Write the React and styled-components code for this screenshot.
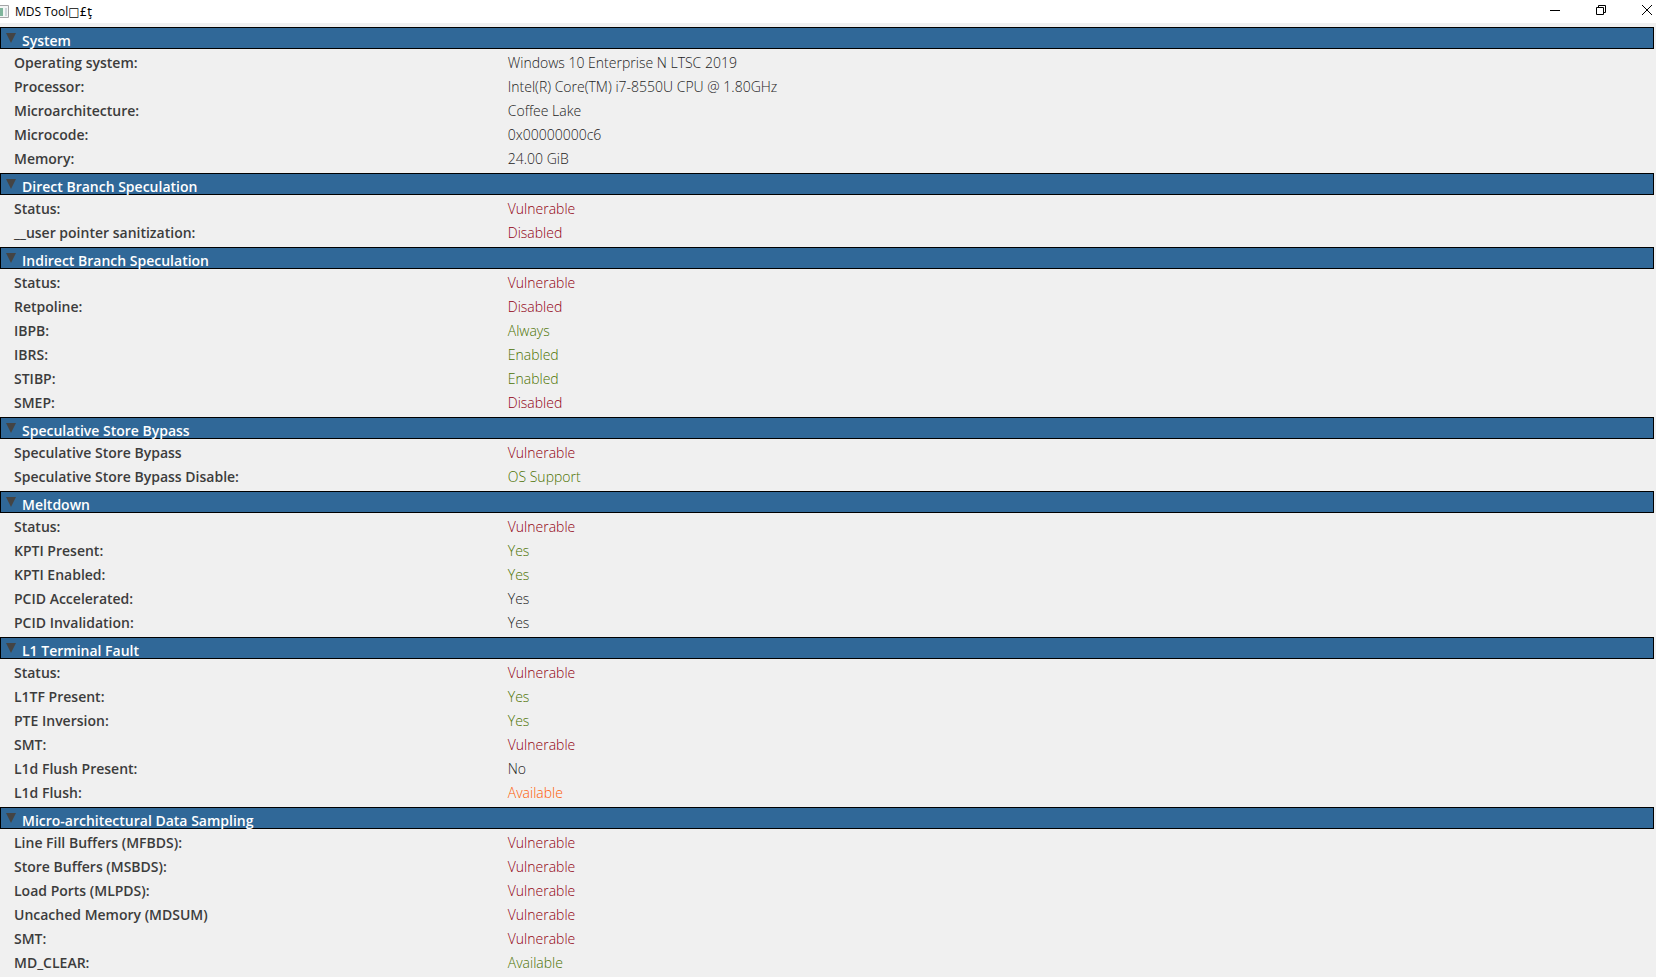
import React, { useState } from "react";
import styled, { createGlobalStyle } from "styled-components";

const sections = [
  {
    title: "System",
    rows: [
      ["Operating system:", "Windows 10 Enterprise N LTSC 2019"],
      ["Processor:", "Intel(R) Core(TM) i7-8550U CPU @ 1.80GHz"],
      ["Microarchitecture:", "Coffee Lake"],
      ["Microcode:", "0x00000000c6"],
      ["Memory:", "24.00 GiB"],
    ],
  },
  {
    title: "Direct Branch Speculation",
    rows: [
      ["Status:", "Vulnerable", "bad"],
      ["__user pointer sanitization:", "Disabled", "bad"],
    ],
  },
  {
    title: "Indirect Branch Speculation",
    rows: [
      ["Status:", "Vulnerable", "bad"],
      ["Retpoline:", "Disabled", "bad"],
      ["IBPB:", "Always", "good"],
      ["IBRS:", "Enabled", "good"],
      ["STIBP:", "Enabled", "good"],
      ["SMEP:", "Disabled", "bad"],
    ],
  },
  {
    title: "Speculative Store Bypass",
    rows: [
      ["Speculative Store Bypass", "Vulnerable", "bad"],
      ["Speculative Store Bypass Disable:", "OS Support", "good"],
    ],
  },
  {
    title: "Meltdown",
    rows: [
      ["Status:", "Vulnerable", "bad"],
      ["KPTI Present:", "Yes", "good"],
      ["KPTI Enabled:", "Yes", "good"],
      ["PCID Accelerated:", "Yes"],
      ["PCID Invalidation:", "Yes"],
    ],
  },
  {
    title: "L1 Terminal Fault",
    rows: [
      ["Status:", "Vulnerable", "bad"],
      ["L1TF Present:", "Yes", "good"],
      ["PTE Inversion:", "Yes", "good"],
      ["SMT:", "Vulnerable", "bad"],
      ["L1d Flush Present:", "No"],
      ["L1d Flush:", "Available", "warn"],
    ],
  },
  {
    title: "Micro-architectural Data Sampling",
    rows: [
      ["Line Fill Buffers (MFBDS):", "Vulnerable", "bad"],
      ["Store Buffers (MSBDS):", "Vulnerable", "bad"],
      ["Load Ports (MLPDS):", "Vulnerable", "bad"],
      ["Uncached Memory (MDSUM)", "Vulnerable", "bad"],
      ["SMT:", "Vulnerable", "bad"],
      ["MD_CLEAR:", "Available", "good"],
    ],
  },
];

const colors = {
  bad: "#900010",
  good: "#4c7200",
  warn: "#ff5a00",
};

function Section({ title, rows }) {
  const [open, setOpen] = useState(true);

  return (
    <section>
      <SectionHeader
        type="button"
        aria-expanded={open}
        onClick={() => setOpen(!open)}
      >
        <Arrow viewBox="0 0 10 10" $open={open} aria-hidden="true">
          <path d="M0 0h10L5 10z" fill="#444" />
        </Arrow>
        <span>{title}</span>
      </SectionHeader>
      {open && (
        <Body>
          <Table>
            <tbody>
              {rows.map(([label, value, status]) => (
                <tr key={label}>
                  <Label scope="row">{label}</Label>
                  <Value $status={status}>{value}</Value>
                </tr>
              ))}
            </tbody>
          </Table>
        </Body>
      )}
    </section>
  );
}

function App() {
  return (
    <Window>
      <GlobalStyle />
      <TitleBar>
        <AppIcon viewBox="0 0 9 14" aria-hidden="true">
          <path d="M0 .5h8.500v12H0" fill="#f4f6f6" stroke="#a5a5a8" />
          <path d="M0 3h3v8H0z" fill="#7fb59c" />
          <path d="M5 3h2v8H5z" fill="#cfd6dc" />
        </AppIcon>
        <Title>
          MDS Tool<Symbols>□£ţ</Symbols>
        </Title>
        <Controls>
          <WindowButton type="button" aria-label="Minimize">
            <svg width="10" height="10" viewBox="0 0 10 10">
              <path d="M0 5.500h10" />
            </svg>
          </WindowButton>
          <WindowButton type="button" aria-label="Restore">
            <svg width="10" height="10" viewBox="0 0 10 10">
              <path d="M.5 2.500h7v7h-7zM2.500 2.500v-2h7v7h-2" />
            </svg>
          </WindowButton>
          <WindowButton type="button" aria-label="Close">
            <svg width="10" height="10" viewBox="0 0 10 10">
              <path d="M0 0l10 10M10 0L0 10" />
            </svg>
          </WindowButton>
        </Controls>
      </TitleBar>
      <Content>
        {sections.map((section) => (
          <Section key={section.title} {...section} />
        ))}
      </Content>
    </Window>
  );
}

export default App;

const GlobalStyle = createGlobalStyle`
  * {
    box-sizing: border-box;
  }
  body {
    margin: 0;
    background: #f0f0f0;
    color: #3c3c3c;
    font-family: "Open Sans", "Noto Sans", sans-serif;
    font-size: 14px;
  }
`;

const Window = styled.div`
  width: 100%;
  min-height: 100vh;
`;

const TitleBar = styled.header`
  display: flex;
  align-items: center;
  justify-content: space-between;
  height: 23px;
  background: #fff;
  color: #000;
`;

const AppIcon = styled.svg`
  width: 9px;
  height: 14px;
  margin-right: 6px;
`;

const Title = styled.h1`
  flex: 1;
  margin: 0;
  font-size: 12px;
  font-weight: 400;
  line-height: 23px;
`;

const Symbols = styled.span`
  font-family: "DejaVu Sans", sans-serif;
`;

const Controls = styled.div`
  display: flex;
  gap: 36px;
  padding: 0 4px 3px 0;
`;

const WindowButton = styled.button`
  display: flex;
  padding: 0;
  border: 0;
  background: none;
  svg {
    fill: none;
    stroke: #000;
  }
`;

const Content = styled.main`
  padding: 4px 2px 0 0;
`;

const SectionHeader = styled.button`
  display: flex;
  width: 100%;
  height: 22px;
  padding: 5px 5px 0;
  gap: 6px;
  border: 1px solid #000;
  background: #306898;
  color: #fff;
  font: inherit;
  font-weight: 600;
  line-height: 16px;
  text-align: left;
`;

const Arrow = styled.svg`
  width: 10px;
  height: 10px;
  transform: ${(props) => (props.$open ? "none" : "rotate(-90deg)")};
`;

const Body = styled.div`
  padding: 2px 0;
`;

const Table = styled.table`
  width: 100%;
  table-layout: fixed;
  border-collapse: collapse;
`;

const Label = styled.th`
  width: 30.7%;
  height: 24px;
  padding: 0 0 0 14px;
  font-weight: 600;
  line-height: 24px;
  text-align: left;
`;

const Value = styled.td`
  height: 24px;
  padding: 0;
  color: ${(props) => colors[props.$status] || "#1c1c1c"};
  font-weight: 300;
  line-height: 24px;
`;
